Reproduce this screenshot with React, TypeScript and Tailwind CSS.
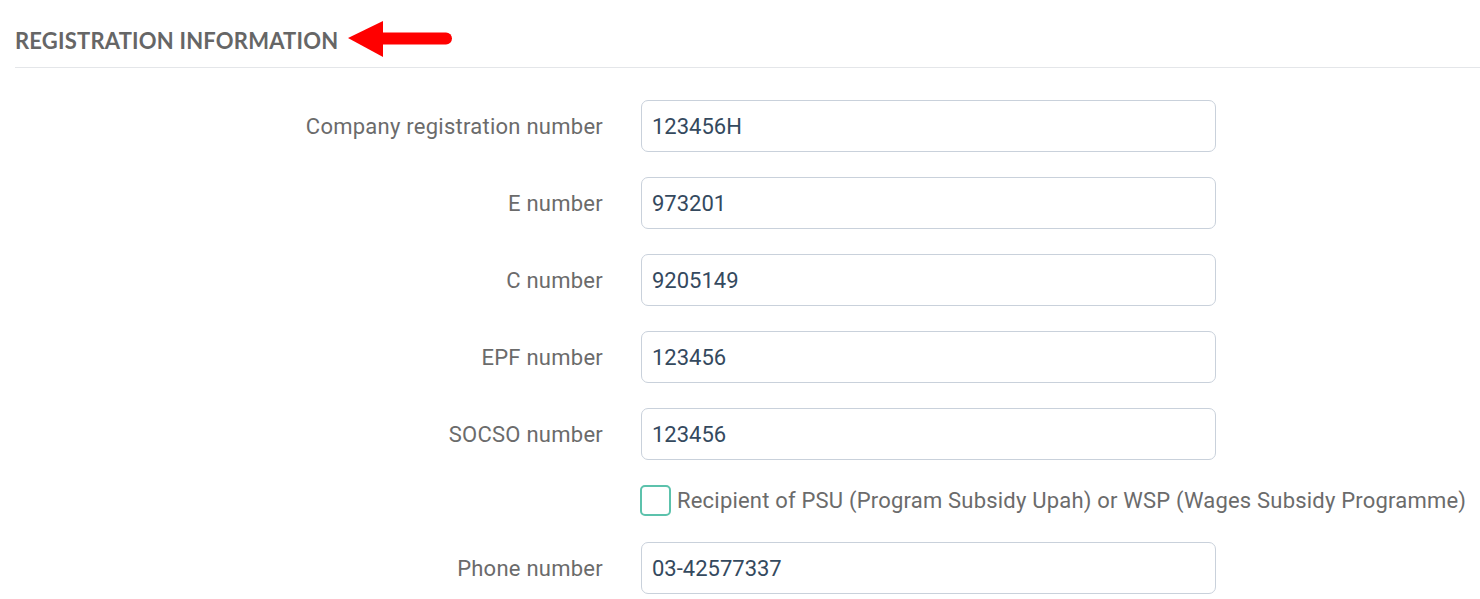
export default function App() {
  const fields = [
    { label: "Company registration number", value: "123456H" },
    { label: "E number", value: "973201" },
    { label: "C number", value: "9205149" },
    { label: "EPF number", value: "123456" },
    { label: "SOCSO number", value: "123456" },
  ];

  const row = (label: string, value: string) => (
    <div key={label} className="flex items-center mb-[25px]">
      <label className="w-[588px] text-right text-[22px] tracking-[0.25px] text-[#6b6b6b]">{label}</label>
      <input
        readOnly
        value={value}
        className="ml-[38px] w-[575px] h-[52px] rounded-[7px] border border-[#c9d1db] bg-white px-[10px] text-[22px] text-[#34495e] outline-none"
      />
    </div>
  );

  return (
    <div className="bg-white min-h-[599px] pl-[15px] pt-[22px]" style={{ fontFamily: "Roboto, 'Liberation Sans', sans-serif" }}>
      <div className="flex items-center h-[36px]">
        <h2 className="text-[22px] font-bold tracking-[0.2px] text-[#666666]" style={{ fontFamily: "Lato, 'Liberation Sans', sans-serif" }}>
          REGISTRATION INFORMATION
        </h2>
        <svg width="106" height="38" viewBox="0 0 106 38" className="ml-[10px]">
          <polygon points="0,17 35,0 35,36" fill="#ff0000" />
          <line x1="34" y1="17.5" x2="98" y2="17.5" stroke="#ff0000" strokeWidth="12" strokeLinecap="round" />
        </svg>
      </div>
      <div className="h-px bg-[#e4e6e9] mt-[9px] mb-[32px]" />
      {fields.map((f) => row(f.label, f.value))}
      <div className="flex items-center mb-[26px] h-[31px] mt-[1px]">
        <div className="w-[588px]" />
        <span className="ml-[37px] w-[31px] h-[31px] rounded-[5px] border-2 border-[#5cc2ac] bg-white" />
        <span className="ml-[6px] text-[22px] tracking-[0.2px] text-[#6b6b6b] whitespace-nowrap">
          Recipient of PSU (Program Subsidy Upah) or WSP (Wages Subsidy Programme)
        </span>
      </div>
      {row("Phone number", "03-42577337")}
    </div>
  );
}
